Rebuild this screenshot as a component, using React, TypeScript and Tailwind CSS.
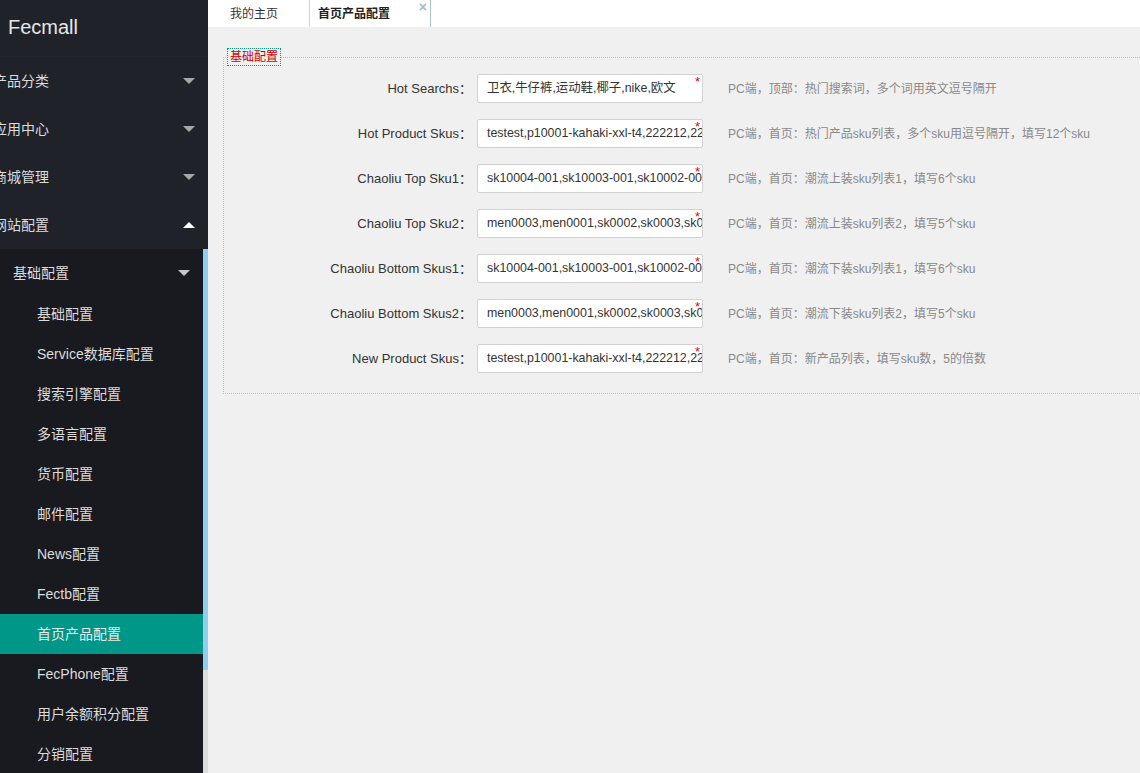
import React from "react";

const topMenu = [
  { name: "产品分类", open: false },
  { name: "应用中心", open: false },
  { name: "商城管理", open: false },
  { name: "网站配置", open: true },
];

const subItems = [
  "基础配置",
  "Service数据库配置",
  "搜索引擎配置",
  "多语言配置",
  "货币配置",
  "邮件配置",
  "News配置",
  "Fectb配置",
  "首页产品配置",
  "FecPhone配置",
  "用户余额积分配置",
  "分销配置",
];

const rows = [
  { label: "Hot Searchs", value: "卫衣,牛仔裤,运动鞋,椰子,nike,欧文", tip: "PC端，顶部：热门搜索词，多个词用英文逗号隔开" },
  { label: "Hot Product Skus", value: "testest,p10001-kahaki-xxl-t4,222212,222213", tip: "PC端，首页：热门产品sku列表，多个sku用逗号隔开，填写12个sku" },
  { label: "Chaoliu Top Sku1", value: "sk10004-001,sk10003-001,sk10002-001", tip: "PC端，首页：潮流上装sku列表1，填写6个sku" },
  { label: "Chaoliu Top Sku2", value: "men0003,men0001,sk0002,sk0003,sk0004", tip: "PC端，首页：潮流上装sku列表2，填写5个sku" },
  { label: "Chaoliu Bottom Skus1", value: "sk10004-001,sk10003-001,sk10002-001", tip: "PC端，首页：潮流下装sku列表1，填写6个sku" },
  { label: "Chaoliu Bottom Skus2", value: "men0003,men0001,sk0002,sk0003,sk0004", tip: "PC端，首页：潮流下装sku列表2，填写5个sku" },
  { label: "New Product Skus", value: "testest,p10001-kahaki-xxl-t4,222212,222213", tip: "PC端，首页：新产品列表，填写sku数，5的倍数" },
];

const Caret: React.FC<{ up?: boolean; color: string }> = ({ up, color }) => (
  <svg width="12" height="6" viewBox="0 0 12 6" className="shrink-0">
    <path d={up ? "M0 6 L6 0 L12 6 Z" : "M0 0 L12 0 L6 6 Z"} fill={color} />
  </svg>
);

export default function App() {
  return (
    <div
      className="flex h-[773px] w-[1140px] overflow-hidden bg-[#f0f0f0]"
      style={{ fontFamily: '"Liberation Sans", Arial, "Noto Sans CJK SC", sans-serif' }}
    >
      {/* sidebar */}
      <aside className="flex w-[208px] shrink-0 flex-col bg-[#191a20]">
        <div className="bg-[#20222a]">
          <div className="flex h-[57px] items-center border-b border-[#23262e] pb-[2px] pl-[8px] text-[20px] text-[#e6e6e6]">
            Fecmall
          </div>
          {topMenu.map((m) => (
            <div key={m.name} className="flex h-[48px] items-center justify-between pr-[13px]">
              <span className="ml-[-7px] text-[14px] text-[#dcdcdc]">{m.name}</span>
              <Caret up={m.open} color={m.open ? "#ffffff" : "#a8a8a8"} />
            </div>
          ))}
        </div>
        <div className="flex min-h-0 flex-1">
          <div className="flex-1 overflow-hidden">
            <div className="flex h-[45px] items-center justify-between pl-[13px] pr-[13px] pt-[3px]">
              <span className="text-[14px] text-[#dcdcdc]">基础配置</span>
              <Caret color="#c8c8c8" />
            </div>
            {subItems.map((s) => (
              <div
                key={s}
                className={
                  "flex h-[40px] items-center pl-[37px] text-[14px] " +
                  (s === "首页产品配置" ? "bg-[#009688] text-[#e8e8e8]" : "text-[#dcdcdc]")
                }
              >
                {s}
              </div>
            ))}
          </div>
          <div className="flex w-[5px] flex-col bg-[#dcdcdc]">
            <div className="h-[421px] bg-[#8dd0ee]" />
          </div>
        </div>
      </aside>

      {/* main */}
      <main className="flex min-w-0 flex-1 flex-col">
        <div className="flex h-[27px] bg-white text-[12px]">
          <div className="flex w-[102px] items-center border-r border-[#c9d6dc] pl-[22px] text-[#333]">我的主页</div>
          <div className="relative flex w-[121px] items-center border-r border-[#a9c4cf] pl-[8px] font-bold text-[#222]">
            首页产品配置
            <span className="absolute right-[3px] top-[-3px] text-[14px] font-bold text-[#a3bcc6]">×</span>
          </div>
        </div>

        <div className="pl-[15px] pt-[21px]">
          <fieldset className="h-[346px] border border-dotted border-r-0 border-[#a8c4c4] pl-[3px]">
            <legend className="border border-dotted border-[#009688] px-[2px] text-[12px] leading-[16px] text-[#cc0000]">
              基础配置
            </legend>
            <div className="flex flex-col gap-[16px] pt-[8px]">
              {rows.map((r) => (
                <div key={r.label} className="flex h-[29px] items-center">
                  <label className="w-[250px] pr-[5px] text-right text-[13px] text-[#333]">{r.label}：</label>
                  <div className="relative h-[29px] w-[226px] overflow-hidden rounded-[2px] border border-[#d2d2d2] bg-white">
                    <div className="overflow-hidden whitespace-nowrap pl-[9px] pr-[5px] text-[12.4px] leading-[27px] text-[#333]">
                      {r.value}
                    </div>
                    <span className="absolute right-[2px] top-[-3px] text-[13px] text-[#e00]">*</span>
                  </div>
                  <span className="pl-[25px] text-[12px] text-[#888]">{r.tip}</span>
                </div>
              ))}
            </div>
          </fieldset>
        </div>
      </main>
    </div>
  );
}
